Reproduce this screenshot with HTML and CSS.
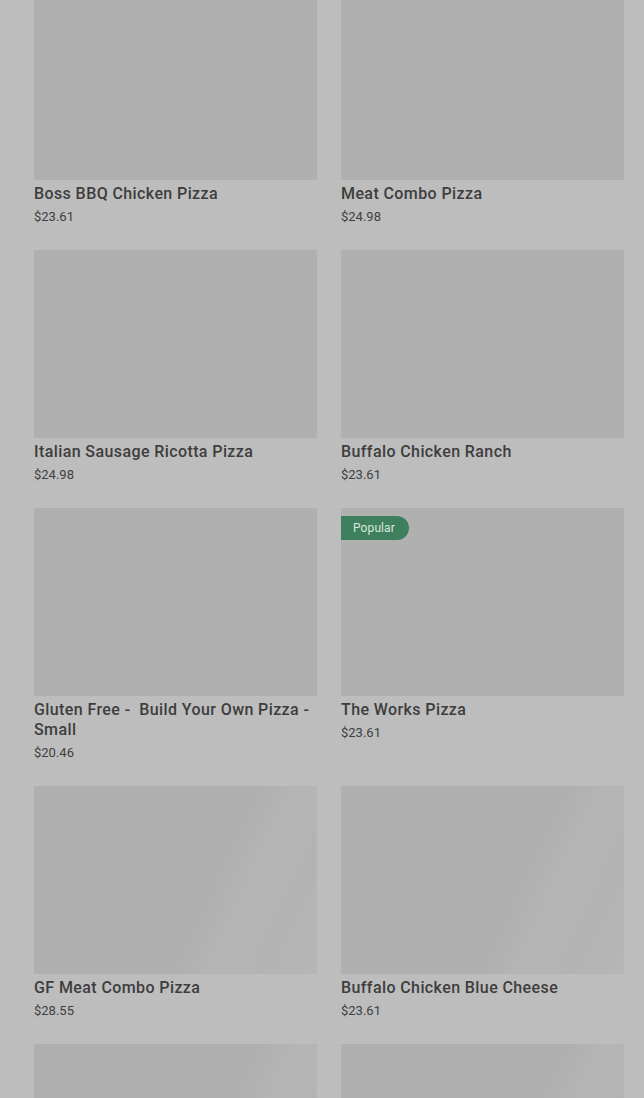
FILE: index.html
```html
<!DOCTYPE html>
<html>
<head>
<meta charset="utf-8">
<link rel="stylesheet" href="styles.css">
</head>
<body>
<main class="menu">
  <div class="grid">
    <div class="card"><div class="thumb"></div><div class="name">Boss BBQ Chicken Pizza</div><div class="price">$23.61</div></div>
    <div class="card"><div class="thumb"></div><div class="name">Meat Combo Pizza</div><div class="price">$24.98</div></div>
    <div class="card"><div class="thumb"></div><div class="name">Italian Sausage Ricotta Pizza</div><div class="price">$24.98</div></div>
    <div class="card"><div class="thumb"></div><div class="name">Buffalo Chicken Ranch</div><div class="price">$23.61</div></div>
    <div class="card"><div class="thumb"></div><div class="name">Gluten Free -&nbsp; Build Your Own Pizza - Small</div><div class="price">$20.46</div></div>
    <div class="card"><div class="thumb"><span class="badge">Popular</span></div><div class="name">The Works Pizza</div><div class="price">$23.61</div></div>
    <div class="card"><div class="thumb shimmer"></div><div class="name">GF Meat Combo Pizza</div><div class="price">$28.55</div></div>
    <div class="card"><div class="thumb shimmer"></div><div class="name">Buffalo Chicken Blue Cheese</div><div class="price">$23.61</div></div>
    <div class="card"><div class="thumb shimmer"></div><div class="name">&nbsp;</div><div class="price">&nbsp;</div></div>
    <div class="card"><div class="thumb shimmer"></div><div class="name">&nbsp;</div><div class="price">&nbsp;</div></div>
  </div>
</main>
</body>
</html>
```
FILE: styles.css
```css
html, body {
  margin: 0;
  padding: 0;
  background: #bdbdbd;
  overflow: hidden;
}
body {
  font-family: Roboto, "Noto Sans", Arial, sans-serif;
  color: #3a3a3a;
}
.menu {
  padding: 0 20px 0 34px;
  margin-top: -8px;
}
.grid {
  display: grid;
  grid-template-columns: 283px 283px;
  column-gap: 24px;
  row-gap: 23px;
}
.card {
  display: flex;
  flex-direction: column;
}
.thumb {
  position: relative;
  height: 188px;
  background: #b0b0b0;
}
.thumb.shimmer {
  background: linear-gradient(115deg, #b0b0b0 0%, #b0b0b0 62%, #b5b5b5 72%, #b3b3b3 85%, #b6b6b6 100%);
}
.badge {
  position: absolute;
  left: 0;
  top: 8px;
  height: 24px;
  line-height: 24px;
  padding: 0 14px 0 12px;
  background: #3e805d;
  color: #d9e8de;
  font-size: 12px;
  letter-spacing: 0.1px;
  border-radius: 0 12px 12px 0;
}
.name {
  margin-top: 4px;
  font-size: 16px;
  line-height: 20px;
  font-weight: 500;
  letter-spacing: 0.4px;
  color: #3d3d3d;
}
.price {
  margin-top: 3px;
  font-size: 13px;
  line-height: 20px;
  color: #404040;
}
```
